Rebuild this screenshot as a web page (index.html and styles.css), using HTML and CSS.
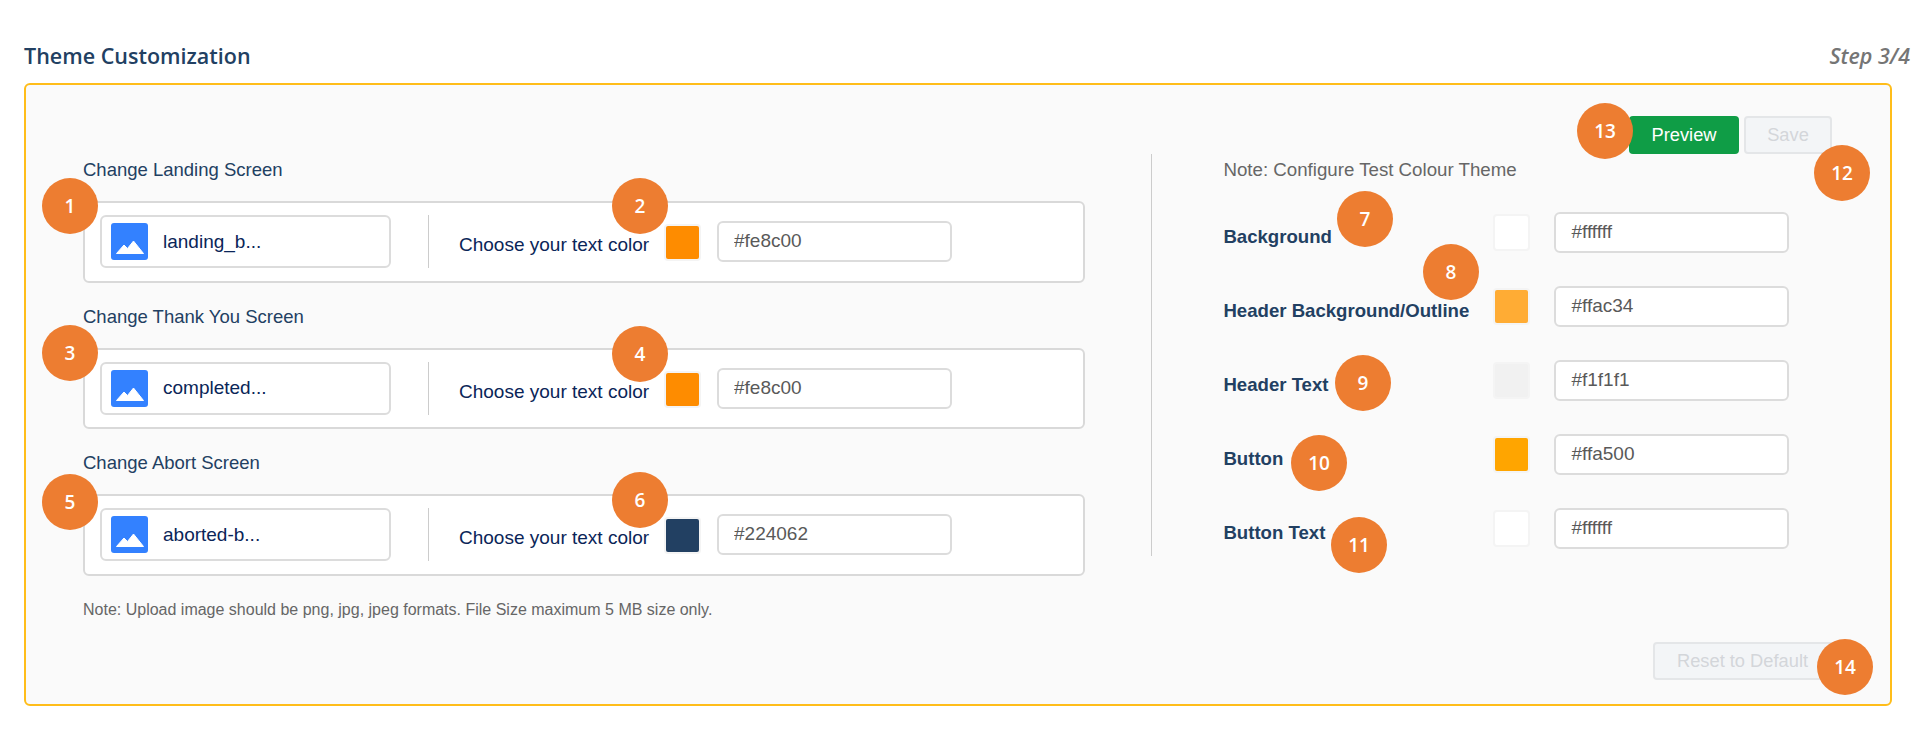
FILE: index.html
```html
<!DOCTYPE html>
<html lang="en">
<head>
<meta charset="utf-8">
<title>Theme Customization</title>
<link rel="stylesheet" href="styles.css">
</head>
<body>
<div class="page">
  <header class="head">
    <h1 class="title">Theme Customization</h1>
    <span class="step">Step 3/4</span>
  </header>
  <main class="panel">
    <section class="left">
      <div class="group">
        <div class="group-label">Change Landing Screen</div>
        <div class="card">
          <div class="file">
            <svg class="file-icon" viewBox="0 0 37 37"><rect width="37" height="37" rx="3" fill="#3381ff"/><path d="M5.5 30.5 13 22 16.5 25.5 22.5 18 32.5 30.5Z" fill="#fff" stroke="#fff" stroke-linejoin="round"/></svg>
            <span class="file-name">landing_b...</span>
          </div>
          <div class="card-rule"></div>
          <span class="choose">Choose your text color</span>
          <span class="swatch sw-orange"></span>
          <input class="hex hex-card" type="text" value="#fe8c00" readonly>
        </div>
      </div>
      <div class="group">
        <div class="group-label">Change Thank You Screen</div>
        <div class="card">
          <div class="file">
            <svg class="file-icon" viewBox="0 0 37 37"><rect width="37" height="37" rx="3" fill="#3381ff"/><path d="M5.5 30.5 13 22 16.5 25.5 22.5 18 32.5 30.5Z" fill="#fff" stroke="#fff" stroke-linejoin="round"/></svg>
            <span class="file-name">completed...</span>
          </div>
          <div class="card-rule"></div>
          <span class="choose">Choose your text color</span>
          <span class="swatch sw-orange"></span>
          <input class="hex hex-card" type="text" value="#fe8c00" readonly>
        </div>
      </div>
      <div class="group">
        <div class="group-label">Change Abort Screen</div>
        <div class="card">
          <div class="file">
            <svg class="file-icon" viewBox="0 0 37 37"><rect width="37" height="37" rx="3" fill="#3381ff"/><path d="M5.5 30.5 13 22 16.5 25.5 22.5 18 32.5 30.5Z" fill="#fff" stroke="#fff" stroke-linejoin="round"/></svg>
            <span class="file-name">aborted-b...</span>
          </div>
          <div class="card-rule"></div>
          <span class="choose">Choose your text color</span>
          <span class="swatch sw-navy"></span>
          <input class="hex hex-card" type="text" value="#224062" readonly>
        </div>
      </div>
      <p class="upload-note">Note: Upload image should be png, jpg, jpeg formats. File Size maximum 5 MB size only.</p>
    </section>
    <section class="right">
      <div class="toolbar">
        <button class="btn btn-preview" type="button">Preview</button>
        <button class="btn btn-disabled btn-save" type="button">Save</button>
      </div>
      <div class="config">
        <p class="config-note">Note: Configure Test Colour Theme</p>
        <div class="row"><span class="row-label">Background</span><span class="swatch sw-white"></span><input class="hex" type="text" value="#ffffff" readonly></div>
        <div class="row"><span class="row-label">Header Background/Outline</span><span class="swatch sw-amber"></span><input class="hex" type="text" value="#ffac34" readonly></div>
        <div class="row"><span class="row-label">Header Text</span><span class="swatch sw-grey"></span><input class="hex" type="text" value="#f1f1f1" readonly></div>
        <div class="row"><span class="row-label">Button</span><span class="swatch sw-gold"></span><input class="hex" type="text" value="#ffa500" readonly></div>
        <div class="row"><span class="row-label">Button Text</span><span class="swatch sw-white"></span><input class="hex" type="text" value="#ffffff" readonly></div>
      </div>
      <div class="reset-wrap">
        <button class="btn btn-disabled btn-reset" type="button">Reset to Default</button>
      </div>
    </section>
    <span class="badge b1">1</span>
    <span class="badge b2">2</span>
    <span class="badge b3">3</span>
    <span class="badge b4">4</span>
    <span class="badge b5">5</span>
    <span class="badge b6">6</span>
    <span class="badge b7">7</span>
    <span class="badge b8">8</span>
    <span class="badge b9">9</span>
    <span class="badge b10">10</span>
    <span class="badge b11">11</span>
    <span class="badge b12">12</span>
    <span class="badge b13">13</span>
    <span class="badge b14">14</span>
  </main>
</div>
</body>
</html>
```
FILE: styles.css
```css
* { box-sizing: border-box; }
html, body { margin: 0; background: #fff; }
body { font-family: "Liberation Sans", Arial, sans-serif; overflow: hidden; }
.page { width: 1920px; height: 732px; padding-left: 24px; }

.head { height: 83px; display: flex; align-items: center; justify-content: space-between; padding-top: 28px; }
.title { margin: 0; font: 600 21.5px/24px "Open Sans", sans-serif; color: #224062; }
.step { font: italic 600 21.5px/24px "Open Sans", sans-serif; color: #757575; margin-right: 10px; }

.panel { position: relative; width: 1868px; height: 623px; display: flex; border: 2px solid #ffbd1a; border-radius: 6px; background: #fafafa; }

.left { width: 1003px; margin-left: 57px; padding-top: 75px; }
.group { margin-bottom: 24.2px; }
.group-label { font-size: 18.5px; line-height: 20px; color: #224062; margin-bottom: 21px; white-space: nowrap; }
.card { height: 81.5px; display: flex; align-items: flex-start; padding-top: 12px; padding-left: 15px; background: #fff; border: 2px solid #d9d9d9; border-radius: 6px; }
.file { width: 291px; height: 53px; display: flex; align-items: center; gap: 15px; padding-left: 9px; border: 2px solid #dcdcdc; border-radius: 6px; }
.file-icon { width: 37px; height: 37px; flex: none; }
.file-name { font-size: 19px; color: #0a2558; }
.card-rule { width: 1px; height: 53px; background: #ccc; margin-left: 37px; margin-right: 30px; }
.choose { font-size: 19px; line-height: 22px; color: #0a2558; width: 190px; white-space: nowrap; margin-top: 19px; }
.upload-note { margin: 0; font-size: 16px; line-height: 20px; color: #666; white-space: nowrap; }

.swatch { display: block; width: 37px; height: 37px; flex: none; border: 2px solid #f4f4f4; border-radius: 4px; }
.card .swatch { margin-left: 15px; margin-top: 9px; }
.sw-orange { background: #fe8c00; }
.sw-navy { background: #224062; }
.sw-white { background: #fff; }
.sw-amber { background: #ffac34; }
.sw-grey { background: #f1f1f1; }
.sw-gold { background: #ffa500; }

.hex { display: block; width: 235px; height: 41px; padding: 0 15px 1px; font: 19px "Liberation Sans", Arial, sans-serif; color: #595959; background: #fff; border: 2px solid #dcdcdc; border-radius: 6px; outline: none; }
.hex-card { margin-left: 16px; margin-top: 6px; }

.right { width: 739px; margin-left: 66px; padding-top: 31px; }
.toolbar { height: 38px; display: flex; justify-content: flex-end; gap: 5px; padding-right: 58px; }
.btn { height: 38px; padding: 0; font: 18.3px "Liberation Sans", Arial, sans-serif; border-radius: 4px; }
.btn-preview { width: 110px; color: #fff; background: #0f9d46; border: 0; }
.btn-disabled { color: #d3d6da; background: #f3f5f7; border: 2px solid #e4e6e8; }
.btn-save { width: 88px; }
.config { height: 402px; padding: 6px 0 0 71px; border-left: 1px solid #ccc; }
.config-note { margin: 0 0 32px; font-size: 18.7px; line-height: 20px; color: #666; white-space: nowrap; }
.row { height: 41px; display: flex; align-items: center; margin-bottom: 33px; }
.row-label { width: 270px; padding-top: 8px; font-size: 18.6px; font-weight: 700; color: #224062; white-space: nowrap; }
.row .swatch { margin-right: 24px; }
.reset-wrap { display: flex; justify-content: flex-end; margin-top: 86px; padding-right: 53px; }
.btn-reset { width: 184px; padding-right: 5px; }

.badge { position: absolute; width: 56px; height: 56px; display: flex; align-items: center; justify-content: center; border-radius: 50%; background: #ed7d31; color: #fff; font: 600 19px/1 "Open Sans", sans-serif; }
.b1 { left: 16px; top: 93px; }
.b2 { left: 586px; top: 93px; }
.b3 { left: 16px; top: 240px; }
.b4 { left: 586px; top: 241px; }
.b5 { left: 16px; top: 389px; }
.b6 { left: 586px; top: 387px; }
.b7 { left: 1311px; top: 106px; }
.b8 { left: 1397px; top: 159px; }
.b9 { left: 1309px; top: 270px; }
.b10 { left: 1265px; top: 350px; }
.b11 { left: 1305px; top: 432px; }
.b12 { left: 1788px; top: 60px; }
.b13 { left: 1551px; top: 18px; }
.b14 { left: 1791px; top: 554px; }
```
